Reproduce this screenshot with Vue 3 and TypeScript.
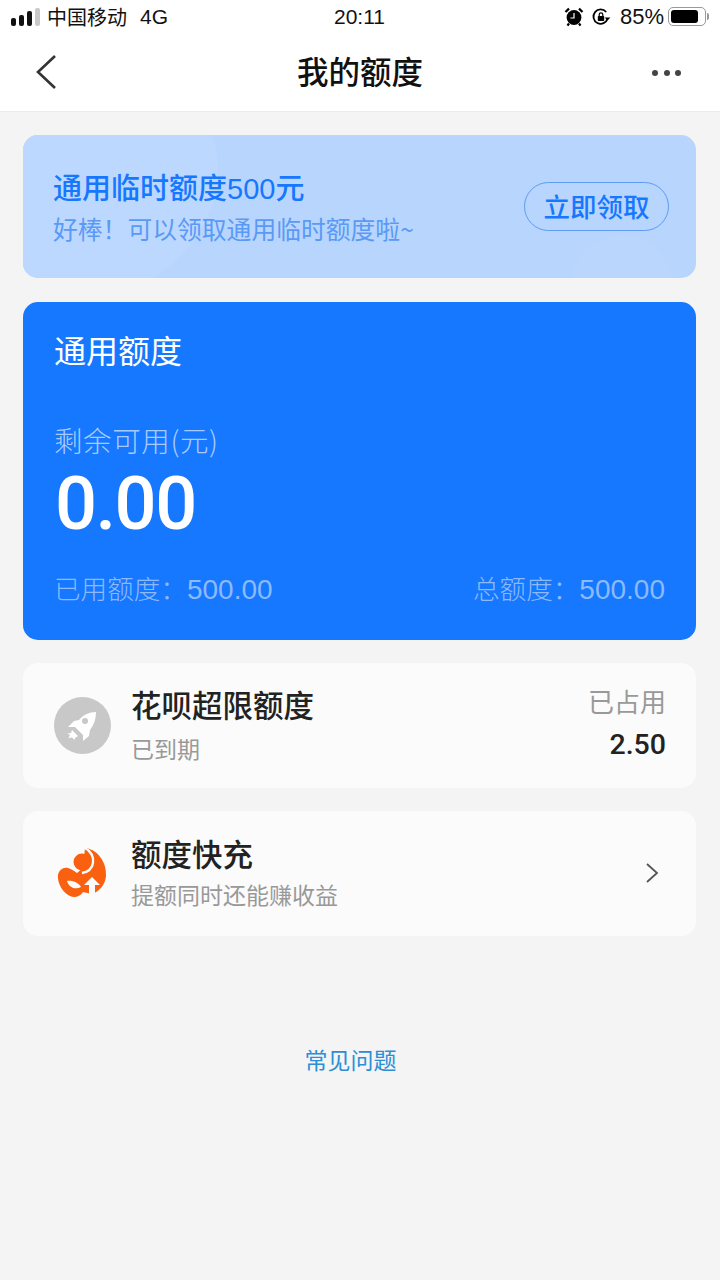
<template>
  <div class="page">
    <div class="top">
      <div class="status-bar">
        <div class="status-left">
          <div class="signal">
            <i style="height: 8px"></i>
            <i style="height: 11px"></i>
            <i style="height: 15px"></i>
            <i class="off" style="height: 18px"></i>
          </div>
          <span class="carrier">中国移动</span>
          <span class="net">4G</span>
        </div>
        <div class="status-time">20:11</div>
        <div class="status-right">
          <svg class="st-icon" width="20" height="20" viewBox="0 0 20 20">
            <circle cx="10" cy="10.5" r="7.4" fill="#000" />
            <path d="M1.5 5 L5 1.6 M18.5 5 L15 1.6 M5 16.5 L3.5 18.6 M15 16.5 L16.5 18.6" stroke="#000" stroke-width="2.2" fill="none" />
            <path d="M10 6 V11 H6.4" stroke="#fff" stroke-width="1.2" fill="none" />
          </svg>
          <svg class="st-icon lock" width="20" height="20" viewBox="0 0 20 20">
            <path d="M16.6 11.5 A7.2 7.2 0 1 1 15.2 5" stroke="#000" stroke-width="1.8" fill="none" />
            <path d="M13.6 10.4 H19.4 L16.5 13.6 Z" fill="#000" />
            <rect x="6.8" y="9" width="6.4" height="5" rx="0.8" fill="#000" />
            <path d="M8.2 9 V7.6 a1.8 1.8 0 0 1 3.6 0 V9" stroke="#000" stroke-width="1.2" fill="none" />
          </svg>
          <span class="pct">85%</span>
          <div class="battery"><div class="battery-fill"></div></div>
          <div class="battery-cap"></div>
        </div>
      </div>
      <div class="nav">
        <svg class="back" width="24" height="36" viewBox="0 0 24 36">
          <path d="M21 2 L4 18 L21 34" stroke="#333" stroke-width="2.6" fill="none" />
        </svg>
        <div class="nav-title">我的额度</div>
        <div class="more"><i></i><i></i><i></i></div>
      </div>
    </div>

    <div class="content">
      <div class="promo">
        <div class="promo-deco-a"></div>
        <div class="promo-deco-b"></div>
        <div class="promo-text">
          <div class="promo-title">通用临时额度500元</div>
          <div class="promo-sub">好棒！可以领取通用临时额度啦~</div>
        </div>
        <div class="promo-btn">立即领取</div>
      </div>

      <div class="quota">
        <div class="quota-name">通用额度</div>
        <div class="quota-label">剩余可用(元)</div>
        <div class="quota-amount">{{ remaining }}</div>
        <div class="quota-foot">
          <span>已用额度：<b>500.00</b></span>
          <span>总额度：<b>500.00</b></span>
        </div>
      </div>

      <div class="row-card over">
        <div class="rocket">
          <svg width="57" height="57" viewBox="4 5 57 57">
            <path d="M46 20 C39 20 33 23 29 28 L24 29 L18 35 L25 35 L33 43 L33 49 L39 44 L40 38 C44 33 46 27 46 20 Z" fill="#fff" />
            <path d="M22 38 L25 41 L28 44 L25 46 L24.5 48 L22 45.5 L18.5 46 L20 43 L17.5 41.5 L21 41 Z" fill="#fff" />
            <circle cx="35" cy="29" r="3" fill="#c8c8c8" />
          </svg>
        </div>
        <div class="row-main">
          <div class="row-title">花呗超限额度</div>
          <div class="row-sub expired">已到期</div>
        </div>
        <div class="row-right">
          <div class="used-label">已占用</div>
          <div class="used-value">2.50</div>
        </div>
      </div>

      <div class="row-card charge">
        <svg class="charge-icon" width="64" height="64" viewBox="0 0 64 64">
          <path d="M35 8 C47 9 57 22 56 36 C55 45 50 51 42 54 L33 52 C30 57 24 58 20 56 C13 53 7 43 8 35 C9 30 13 27 18 28 C22 29 24 31 27 33 L33 28 Z" fill="#f9600f" />
          <path d="M35 8 C41 11 44 17 43 23 C42 29 38 32 32 33" stroke="#fbfbfb" stroke-width="2.4" fill="none" />
          <circle cx="32" cy="22" r="8.5" fill="#f9600f" />
          <path d="M17 41 C22 40 29 43 31 47 C26 50 19 48 17 41 Z" fill="#fbfbfb" />
          <path d="M42 37 L50 45 H45 V56 H39 V45 H34 Z" fill="#fbfbfb" />
        </svg>
        <div class="row-main">
          <div class="row-title">额度快充</div>
          <div class="row-sub">提额同时还能赚收益</div>
        </div>
        <svg class="chev" width="14" height="22" viewBox="0 0 14 22">
          <path d="M2 2 L12 11 L2 20" stroke="#555" stroke-width="1.8" fill="none" />
        </svg>
      </div>

      <div class="faq">常见问题</div>
    </div>
  </div>
</template>

<script setup lang="ts">
const remaining = '0.00'
</script>

<style>
html,
body {
  margin: 0;
  background: #f4f4f4;
}
</style>

<style scoped>
.page {
  width: 720px;
  height: 1280px;
  overflow: hidden;
  background: #f4f4f4;
  font-family: "Noto Sans CJK SC", "Liberation Sans", sans-serif;
}

.top {
  height: 111px;
  background: #fff;
  border-bottom: 1px solid #ececec;
}

.status-bar {
  height: 33px;
  padding: 0 11px 0 11px;
  display: grid;
  grid-template-columns: 1fr auto 1fr;
  align-items: center;
  color: #111;
  font-family: "Liberation Sans", "Noto Sans CJK SC", sans-serif;
  font-size: 21px;
}

.status-time {
  font-size: 21px;
  margin-left: -1px;
}

.status-left,
.status-right {
  display: flex;
  align-items: center;
}

.status-right {
  justify-content: flex-end;
}

.signal {
  display: flex;
  align-items: flex-end;
  gap: 3px;
  height: 18px;
  margin-right: 7px;
}

.signal i {
  width: 5px;
  background: #111;
  border-radius: 2px;
}

.signal i.off {
  background: #c9c9c9;
}

.carrier {
  font-family: "Noto Sans CJK SC", sans-serif;
  font-size: 20px;
}

.net {
  margin-left: 13px;
}

.st-icon {
  margin-right: 7px;
}

.lock {
  margin-right: 9px;
}

.pct {
  font-size: 22px;
  margin-right: 4px;
}

.battery {
  width: 38px;
  height: 19px;
  box-sizing: border-box;
  border: 1.5px solid #999;
  border-radius: 5px;
  padding: 2px;
}

.battery-fill {
  width: 27px;
  height: 100%;
  background: #000;
  border-radius: 3px;
}

.battery-cap {
  width: 2px;
  height: 7px;
  margin-left: 1px;
  background: #999;
  border-radius: 0 2px 2px 0;
}

.nav {
  height: 77px;
  padding: 0 39px;
  display: grid;
  grid-template-columns: 1fr auto 1fr;
  align-items: center;
}

.back {
  margin-left: -5px;
}

.nav-title {
  font-size: 31.5px;
  font-weight: 500;
  color: #111;
  margin-top: -3px;
}

.more {
  display: flex;
  gap: 5.5px;
  margin-top: 3px;
  justify-self: end;
}

.more i {
  width: 6px;
  height: 6px;
  border-radius: 50%;
  background: #444;
}

.content {
  padding: 23px 24px 0 23px;
  display: flex;
  flex-direction: column;
}

.promo {
  height: 143px;
  border-radius: 15px;
  background: #b8d5fd;
  position: relative;
  overflow: hidden;
  display: flex;
  align-items: center;
  justify-content: space-between;
  padding: 0 27px 0 30px;
}

.promo-deco-a {
  position: absolute;
  left: -195px;
  top: -110px;
  width: 390px;
  height: 290px;
  border-radius: 50%;
  background: #bdd8fe;
}

.promo-deco-b {
  position: absolute;
  right: 22px;
  top: 100px;
  width: 104px;
  height: 110px;
  border-radius: 50%;
  background: #bad6fd;
}

.promo-text {
  position: relative;
  margin-top: 2px;
}

.promo-title {
  font-size: 29px;
  line-height: 36px;
  font-weight: 500;
  color: #1677ff;
  font-family: "Liberation Sans", "Noto Sans CJK SC", sans-serif;
}

.promo-sub {
  font-size: 24.8px;
  line-height: 34px;
  margin-top: 4px;
  color: #5a9af6;
}

.promo-btn {
  position: relative;
  width: 145px;
  height: 49px;
  box-sizing: border-box;
  border: 1px solid #5e9bf2;
  border-radius: 25px;
  font-size: 26.5px;
  font-weight: 500;
  line-height: 46px;
  text-align: center;
  color: #1677ff;
}

.quota {
  margin-top: 24px;
  height: 338px;
  box-sizing: border-box;
  padding: 25px 31px 0;
  border-radius: 15px;
  background: #1677ff;
  color: #fff;
  display: flex;
  flex-direction: column;
}

.quota-name {
  font-size: 32px;
  line-height: 44px;
}

.quota-label {
  margin-top: 49px;
  font-size: 28.5px;
  font-weight: 300;
  line-height: 40px;
  letter-spacing: 0.6px;
  color: #a6cbfe;
}

.quota-amount {
  font-family: Roboto, "Liberation Sans", sans-serif;
  font-size: 74px;
  font-weight: 500;
  line-height: 84px;
  margin: 2px 0 0 1px;
  letter-spacing: -1.5px;
}

.quota-foot {
  margin-top: 23px;
  display: flex;
  justify-content: space-between;
  font-size: 26.6px;
  font-weight: 300;
  line-height: 38px;
  color: #8bbafd;
}

.quota-foot b {
  font-family: "Liberation Sans", sans-serif;
  font-size: 28px;
  font-weight: 400;
}

.row-card {
  height: 125px;
  box-sizing: border-box;
  border-radius: 15px;
  background: #fbfbfb;
  display: flex;
  align-items: center;
  padding: 0 30px 0 31px;
}

.over {
  margin-top: 23px;
}

.over .row-main {
  margin-top: -4px;
  margin-left: 20px;
}

.charge {
  margin-top: 23px;
}

.charge .row-main {
  margin-top: -5px;
  margin-left: 17px;
}

.charge .row-sub {
  margin-top: 3px;
}

.rocket {
  width: 57px;
  height: 57px;
  border-radius: 50%;
  background: #c8c8c8;
  flex-shrink: 0;
}

.rocket svg {
  display: block;
}

.charge-icon {
  flex-shrink: 0;
  margin: -3px 0 0 -4px;
}

.row-main {
  flex: 1;
}

.row-title {
  font-size: 30.5px;
  line-height: 42px;
  font-weight: 500;
  color: #222;
}

.row-sub {
  font-size: 23px;
  line-height: 34px;
  color: #999;
}

.expired {
  margin-top: 6px;
}

.row-right {
  text-align: right;
  margin-top: -4px;
}

.used-label {
  font-size: 26px;
  line-height: 36px;
  color: #999;
}

.used-value {
  font-family: Roboto, "Liberation Sans", sans-serif;
  font-size: 28.5px;
  font-weight: 500;
  line-height: 40px;
  color: #222;
  margin-top: 6px;
}

.chev {
  margin: -2px 7px 0 0;
}

.faq {
  margin-top: 106px;
  text-align: center;
  font-size: 23px;
  line-height: 34px;
  color: #2b8fd6;
  padding-right: 18px;
}
</style>
